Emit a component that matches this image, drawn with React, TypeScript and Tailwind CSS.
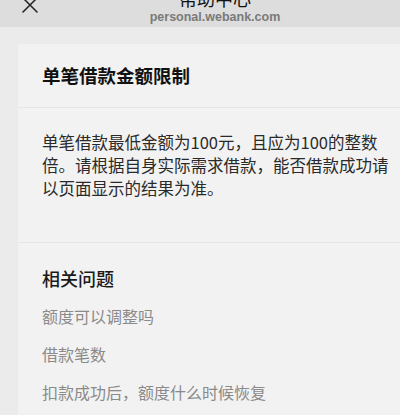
import React from 'react';

const related = ['额度可以调整吗', '借款笔数', '扣款成功后，额度什么时候恢复'];

const App: React.FC = () => {
  return (
    <div
      className="w-[400px] h-[415px] overflow-hidden bg-[#ebebeb]"
      style={{ fontFamily: '"Noto Sans CJK SC", "Liberation Sans", sans-serif' }}
    >
      {/* top bar, partly scrolled off */}
      <div className="relative h-[27px] overflow-hidden bg-[#dddddd]">
        <svg
          className="absolute left-[22px] top-[-3px]"
          width="16"
          height="16"
          viewBox="0 0 16 16"
          fill="none"
          stroke="#222"
          strokeWidth="1.5"
          strokeLinecap="round"
        >
          <path d="M1 1L15 15M15 1L1 15" />
        </svg>
        <div className="flex flex-col items-center mt-[-13px] pl-[30px]">
          <span className="text-[18px] leading-[22px] text-[#111]">帮助中心</span>
          <span
            className="text-[12.5px] leading-[16px] font-semibold text-[#7a7a7a]"
            style={{ fontFamily: '"Liberation Sans", sans-serif' }}
          >
            personal.webank.com
          </span>
        </div>
      </div>

      <div className="pl-[18px] pt-[17px]">
        <div className="flex flex-col gap-px bg-[#e6e6e6]">
          <div className="bg-[#f2f2f2] h-[63px] flex items-center pl-[24px]">
            <h1 className="text-[18.5px] font-bold text-[#111] leading-none">单笔借款金额限制</h1>
          </div>
          <div className="bg-[#f2f2f2] h-[134px] pl-[24px] pr-[8px] pt-[23px]">
            <p className="text-[16.5px] leading-[23px] text-[#2a2a2a]">
              单笔借款最低金额为100元，且应为100的整数倍。请根据自身实际需求借款，能否借款成功请以页面显示的结果为准。
            </p>
          </div>
          <div className="bg-[#f2f2f2] h-[200px] pl-[24px] pt-[23px]">
            <h2 className="text-[18px] leading-[24px] font-medium text-[#1a1a1a]">相关问题</h2>
            <ul className="mt-[14px] flex flex-col gap-[14px]">
              {related.map((q) => (
                <li key={q} className="text-[16px] leading-[24px] text-[#8a8a8a]">
                  {q}
                </li>
              ))}
            </ul>
          </div>
        </div>
      </div>
    </div>
  );
};

export default App;
